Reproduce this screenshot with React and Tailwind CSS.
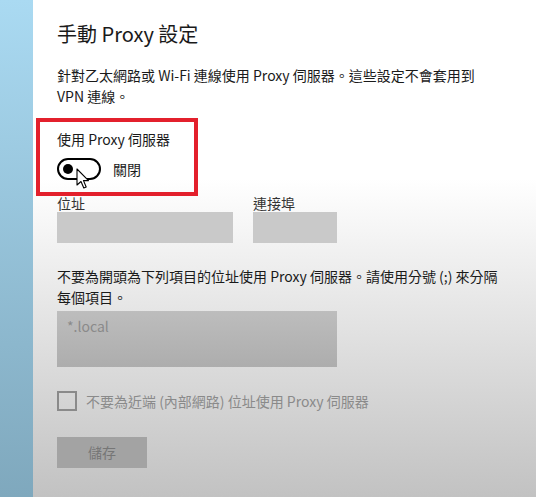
import React from "react";

const font = { fontFamily: '"Noto Sans CJK TC", "Noto Sans", sans-serif' };

function Cursor() {
  return (
    <svg
      className="absolute left-[19px] top-[10px]"
      width="14"
      height="22"
      viewBox="0 0 14 22"
    >
      <path
        d="M1 1 L1 17 L5 13.5 L7.8 20 L10.2 19 L7.5 12.6 L12.5 12.6 Z"
        fill="#fff"
        stroke="#000"
        strokeWidth="1.1"
        strokeLinejoin="round"
      />
    </svg>
  );
}

export default function App() {
  return (
    <div
      className="flex h-[497px] w-[536px] overflow-hidden text-[#1a1a1a]"
      style={font}
    >
      {/* left strip of the window behind */}
      <div className="w-[33px] shrink-0 bg-linear-to-b from-[#aadaf2] to-[#7fa8bd]" />

      <div className="flex-1 bg-linear-to-b from-white from-[36%] to-[#c2c2c2] pl-[24px] pt-[20px]">
        <h1 className="text-[20px] leading-[28px] font-normal">手動 Proxy 設定</h1>

        <p className="mt-[17px] text-[14px] leading-[21px]">
          針對乙太網路或 Wi-Fi 連線使用 Proxy 伺服器。這些設定不會套用到
          <br />
          VPN 連線。
        </p>

        {/* highlighted toggle */}
        <div className="mt-[11px] -ml-[21px] h-[78px] w-[162px] border-4 border-[#e3202c] pl-[17px] pt-[7px]">
          <div className="text-[14px] leading-[20px]">使用 Proxy 伺服器</div>
          <div className="relative mt-[9px] flex items-center gap-[12px]">
            <div className="flex h-[22px] w-[44px] items-center rounded-full border-2 border-black bg-white pl-[4px]">
              <div className="h-[10px] w-[10px] rounded-full bg-black" />
            </div>
            <span className="text-[14px] leading-[20px]">關閉</span>
            <Cursor />
          </div>
        </div>

        <div className="mt-[-1px] flex gap-[20px]">
          <div className="flex flex-col">
            <span className="text-[14px] leading-[16px] text-[#333]">位址</span>
            <div className="mt-[1px] h-[31px] w-[176px] bg-[#c9c9c9]" />
          </div>
          <div className="flex flex-col">
            <span className="text-[14px] leading-[16px] text-[#333]">連接埠</span>
            <div className="mt-[1px] h-[31px] w-[84px] bg-[#c9c9c9]" />
          </div>
        </div>

        <p className="mt-[23px] text-[14px] leading-[21px]">
          不要為開頭為下列項目的位址使用 Proxy 伺服器。請使用分號 (;) 來分隔
          <br />
          每個項目。
        </p>

        <div className="mt-[3px] h-[56px] w-[280px] bg-linear-to-b from-[#bdbdbd] to-[#adadad] px-[10px] pt-[6px] text-[14px] leading-[18px] text-[#8a8a8a]">
          *.local
        </div>

        <label className="mt-[24px] flex items-center gap-[9px]">
          <span className="h-[20px] w-[20px] border-2 border-[#8a8a8a]" />
          <span className="text-[14px] leading-[20px] text-[#8a8a8a]">
            不要為近端 (內部網路) 位址使用 Proxy 伺服器
          </span>
        </label>

        <button className="mt-[26px] h-[31px] w-[90px] bg-[#a3a3a3] text-[14px] text-[#767676]">
          儲存
        </button>
      </div>
    </div>
  );
}
